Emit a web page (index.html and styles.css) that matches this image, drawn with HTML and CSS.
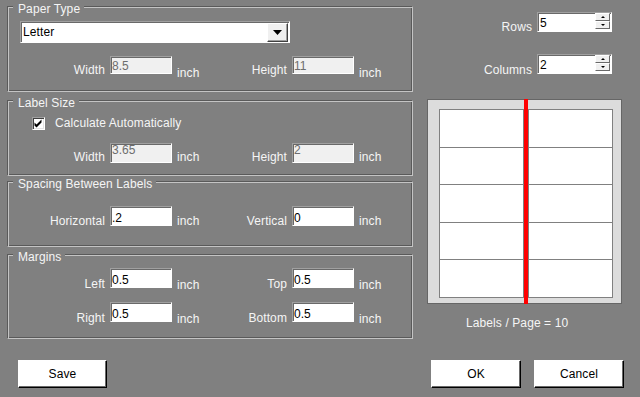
FILE: index.html
```html
<!DOCTYPE html>
<html>
<head>
<meta charset="utf-8">
<title>Label Setup</title>
<link rel="stylesheet" href="styles.css">
</head>
<body>
<div class="dialog">
  <div class="left">
    <div class="group g-paper">
      <div class="legend">Paper Type</div>
      <div class="combo">
        <div class="combo-text">Letter</div>
        <div class="combo-btn">
          <svg width="9" height="5" viewBox="0 0 9 5"><polygon points="0,0 9,0 4.5,5" fill="#000"/></svg>
        </div>
      </div>
      <div class="frow frow-paper">
        <div class="flabel">Width</div>
        <div class="tbox disabled"><div class="tv">8.5</div></div>
        <div class="unit">inch</div>
        <div class="flabel">Height</div>
        <div class="tbox disabled"><div class="tv">11</div></div>
        <div class="unit">inch</div>
      </div>
    </div>

    <div class="group g-size">
      <div class="legend">Label Size</div>
      <div class="checkrow">
        <div class="checkbox">
          <svg width="11" height="11" viewBox="0 0 11 11"><path d="M1.5 4.5 L3.5 6.5 L8.5 1.5 L8.5 4.5 L3.5 9.5 L1.5 7.5 Z" fill="#000"/></svg>
        </div>
        <div class="checklabel">Calculate Automatically</div>
      </div>
      <div class="frow frow-size">
        <div class="flabel">Width</div>
        <div class="tbox disabled"><div class="tv">3.65</div></div>
        <div class="unit">inch</div>
        <div class="flabel">Height</div>
        <div class="tbox disabled"><div class="tv">2</div></div>
        <div class="unit">inch</div>
      </div>
    </div>

    <div class="group g-spacing">
      <div class="legend">Spacing Between Labels</div>
      <div class="frow frow-spacing">
        <div class="flabel">Horizontal</div>
        <div class="tbox"><div class="tv">.2</div></div>
        <div class="unit">inch</div>
        <div class="flabel">Vertical</div>
        <div class="tbox"><div class="tv">0</div></div>
        <div class="unit">inch</div>
      </div>
    </div>

    <div class="group g-margins">
      <div class="legend">Margins</div>
      <div class="frow frow-margins">
        <div class="flabel">Left</div>
        <div class="tbox"><div class="tv">0.5</div></div>
        <div class="unit">inch</div>
        <div class="flabel">Top</div>
        <div class="tbox"><div class="tv">0.5</div></div>
        <div class="unit">inch</div>
      </div>
      <div class="frow frow-margins frow-second">
        <div class="flabel">Right</div>
        <div class="tbox"><div class="tv">0.5</div></div>
        <div class="unit">inch</div>
        <div class="flabel">Bottom</div>
        <div class="tbox"><div class="tv">0.5</div></div>
        <div class="unit">inch</div>
      </div>
    </div>
  </div>

  <div class="right">
    <div class="spinrow spin-rows">
      <div class="spinlabel">Rows</div>
      <div class="tbox spinbox">
        <div class="tv">5</div>
        <div class="spinbtns">
          <div class="spinbtn"><span class="arrow-up"></span></div>
          <div class="spinbtn"><span class="arrow-down"></span></div>
        </div>
      </div>
    </div>
    <div class="spinrow spin-cols">
      <div class="spinlabel">Columns</div>
      <div class="tbox spinbox">
        <div class="tv">2</div>
        <div class="spinbtns">
          <div class="spinbtn"><span class="arrow-up"></span></div>
          <div class="spinbtn"><span class="arrow-down"></span></div>
        </div>
      </div>
    </div>

    <div class="preview">
      <div class="pcol">
        <div class="pcell"></div><div class="pcell"></div><div class="pcell"></div><div class="pcell"></div><div class="pcell"></div>
      </div>
      <div class="pgap"></div>
      <div class="pcol">
        <div class="pcell"></div><div class="pcell"></div><div class="pcell"></div><div class="pcell"></div><div class="pcell"></div>
      </div>
    </div>
    <div class="count">Labels / Page = 10</div>
  </div>
</div>

<div class="btnbar">
  <div class="btn">Save</div>
  <div class="spacer"></div>
  <div class="btn">OK</div>
  <div class="btn btn-cancel">Cancel</div>
</div>
</body>
</html>
```

FILE: styles.css
```css
html, body {
  margin: 0;
  padding: 0;
}

body {
  background: #808080;
  width: 640px;
  height: 397px;
  overflow: hidden;
  font-family: "Liberation Sans", Arial, sans-serif;
  font-size: 12px;
  line-height: 14px;
  color: #f5f5f5;
  letter-spacing: 0.1px;
}

.dialog {
  display: flex;
  align-items: flex-start;
}

.left {
  margin-left: 7px;
  width: 406px;
  display: flex;
  flex-direction: column;
}

/* etched group box */
.group {
  position: relative;
  box-sizing: border-box;
  border: 1px solid;
  border-color: #5a5a5a #c4c4c4 #c4c4c4 #5a5a5a;
  box-shadow: inset 1px 1px 0 #c4c4c4, inset -1px -1px 0 #5a5a5a;
}

.legend {
  position: absolute;
  top: -5px;
  left: 5px;
  padding: 0 4px 0 5px;
  background: #808080;
  white-space: nowrap;
}

.g-paper { margin-top: 6px; height: 86px; }
.g-size { margin-top: 8px; height: 76px; }
.g-spacing { margin-top: 5px; height: 66px; }
.g-margins { margin-top: 7px; height: 85px; }

/* combo box */
.combo {
  margin: 14px 0 0 12px;
  width: 270px;
  height: 22px;
  box-sizing: border-box;
  display: flex;
  background: #fff;
  border: 1px solid;
  border-color: #a0a0a0 #ffffff #ffffff #a0a0a0;
  box-shadow: inset 1px 1px 0 #696969;
  color: #000;
}

.combo-text {
  flex: 1;
  padding: 3px 0 0 2px;
}

.combo-btn {
  width: 21px;
  height: 19px;
  margin: 1px 1px 0 0;
  box-sizing: border-box;
  background: #f0f0f0;
  border: 1px solid;
  border-color: #ffffff #404040 #404040 #ffffff;
  box-shadow: inset -1px -1px 0 #a0a0a0;
  display: flex;
  align-items: center;
  justify-content: center;
}

/* field rows */
.frow {
  display: grid;
  grid-template-columns: 97px 62px 40px 65px 62px auto;
  column-gap: 5px;
  align-items: start;
  grid-template-rows: 20px;
}

.flabel {
  text-align: right;
  white-space: nowrap;
}

.unit {
  white-space: nowrap;
}

.tbox {
  box-sizing: border-box;
  height: 20px;
  background: #fff;
  color: #000;
  border: 1px solid;
  border-color: #a0a0a0 #ffffff #ffffff #a0a0a0;
  box-shadow: inset 1px 1px 0 #696969;
  padding-left: 1px;
  white-space: nowrap;
  letter-spacing: 0;
}

.tbox.disabled {
  background: #f0f0f0;
  color: #6d6d6d;
}

.frow-paper { margin-top: 13px; grid-template-rows: 18px; }
.frow-paper .tbox { height: 18px; }
.frow-paper .tv { padding-top: 2px; }
.frow-paper .flabel { margin-top: 7px; }
.frow-paper .unit { margin-top: 10px; }

.frow-size { margin-top: 13px; }
.frow-size .tv { margin-top: -1px; }
.frow-size .flabel,
.frow-size .unit { margin-top: 7px; }

.frow-spacing { margin-top: 24px; }
.frow-spacing .tv { padding-top: 4px; }
.frow-spacing .flabel,
.frow-spacing .unit { margin-top: 8px; }

.frow-margins { margin-top: 13px; }
.frow-margins.frow-second { margin-top: 14px; }
.frow-margins .tv { padding-top: 4px; }
.frow-margins .flabel { margin-top: 9px; }
.frow-margins .unit { margin-top: 10px; }

/* checkbox */
.checkrow {
  display: flex;
  align-items: center;
  height: 14px;
  margin: 15px 0 0 24px;
}

.checkbox {
  width: 13px;
  height: 13px;
  box-sizing: border-box;
  background: #fff;
  border: 1px solid;
  border-color: #a0a0a0 #ffffff #ffffff #a0a0a0;
  box-shadow: inset 1px 1px 0 #404040, inset -1px -1px 0 #e3e3e3;
  display: flex;
  align-items: center;
  justify-content: center;
}

.checklabel {
  margin-left: 10px;
  white-space: nowrap;
}

/* right column */
.right {
  margin-left: 14px;
  width: 195px;
  display: flex;
  flex-direction: column;
}

.spinrow {
  display: flex;
  justify-content: flex-end;
  align-items: flex-start;
  padding-right: 10px;
}

.spin-rows { margin-top: 12px; }
.spin-cols { margin-top: 20px; }

.spinlabel {
  margin: 8px 5px 0 0;
}

.spin-cols .spinlabel { margin-top: 9px; }

.spinbox {
  width: 75px;
  display: flex;
  justify-content: space-between;
  padding-left: 2px;
}

.spinbox .tv { padding-top: 3px; }

.spinbtns {
  width: 15px;
  margin-right: 1px;
  display: flex;
  flex-direction: column;
}

.spinbtn {
  height: 8px;
  box-sizing: border-box;
  background: #f0f0f0;
  border: 1px solid;
  border-color: #ffffff #696969 #696969 #ffffff;
  display: flex;
  align-items: center;
  justify-content: center;
}

.arrow-up {
  width: 0;
  height: 0;
  border-left: 2px solid transparent;
  border-right: 2px solid transparent;
  border-bottom: 2px solid #000;
}

.arrow-down {
  width: 0;
  height: 0;
  border-left: 2px solid transparent;
  border-right: 2px solid transparent;
  border-top: 2px solid #000;
}

/* preview */
.preview {
  margin-top: 22px;
  width: 195px;
  height: 205px;
  box-sizing: border-box;
  background: #dcdcdc;
  border: 1px solid #666666;
  padding: 9px 8px 5px 11px;
  display: flex;
}

.pcol {
  width: 85px;
  height: 189px;
  box-sizing: border-box;
  border: 1px solid #808080;
  background: #fff;
  display: flex;
  flex-direction: column;
}

.pcell {
  flex: 1;
  border-bottom: 1px solid #808080;
}

.pcell:last-child {
  border-bottom: 0;
}

.pgap {
  width: 4px;
  background: #ff0000;
  margin: -10px 0 -6px 0;
}

.count {
  margin-top: 12px;
  padding-left: 39px;
  white-space: nowrap;
}

/* buttons */
.btnbar {
  display: flex;
  margin-top: 21px;
  padding: 0 16px 0 18px;
}

.spacer {
  flex: 1;
}

.btn {
  width: 90px;
  height: 28px;
  box-sizing: border-box;
  background: #fff;
  color: #000;
  border: 1px solid;
  border-color: #ffffff #000000 #000000 #ffffff;
  box-shadow: inset -1px -1px 0 #696969;
  text-align: center;
  line-height: 26px;
}

.btnbar .btn:first-child {
  width: 89px;
}

.btn-cancel {
  margin-left: 13px;
}
```
